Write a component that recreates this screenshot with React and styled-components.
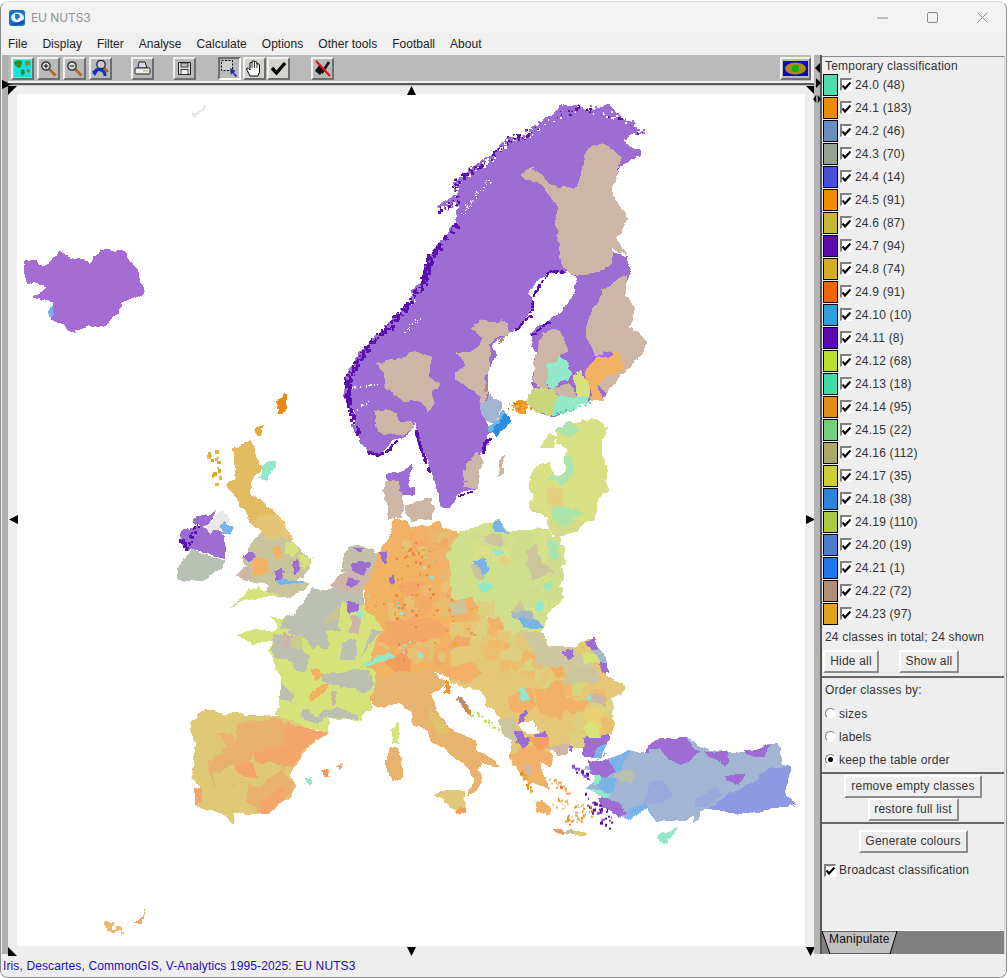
import React from 'react'
import styled, { createGlobalStyle } from 'styled-components'

const GlobalStyle = createGlobalStyle`
  html, body { margin: 0; padding: 0; background: #fff; }
  body { width: 1008px; height: 978px; overflow: hidden; font-family: "Liberation Sans", Arial, sans-serif; }
`

const Window = styled.div`
  width: 1007px;
  height: 977px;
  margin-top: 1px;
  box-sizing: border-box;
  border: 1px solid #8c8c8c;
  border-top-color: #d8d8d8;
  border-radius: 8px;
  background: #f0f0f0;
  display: flex;
  flex-direction: column;
  overflow: hidden;
`
const TitleBar = styled.div`
  height: 31px;
  flex: none;
  background: #f3f3f3;
  display: flex;
  align-items: center;
  padding-left: 8px;
  color: #8f8f8f;
  font-size: 12px;
  letter-spacing: -0.1px;
  font-family: "Inter", "Liberation Sans", sans-serif;
  gap: 6px;
`
const WinButtons = styled.div`
  margin-left: auto;
  margin-right: -1px;
  display: flex;
  align-items: center;
  height: 100%;
`
const WinButton = styled.div`
  width: 50px;
  height: 100%;
  display: flex;
  align-items: center;
  justify-content: center;
`
const MenuBar = styled.div`
  height: 22px;
  flex: none;
  display: flex;
  align-items: center;
  padding-left: 7px;
  gap: 15px;
  font-size: 12px;
  letter-spacing: 0.02px;
  color: #222;
`
const Body = styled.div`
  flex: 1;
  min-height: 0;
  display: flex;
  position: relative;
`
const LeftColumn = styled.div`
  width: 813px;
  flex: none;
  display: flex;
  flex-direction: column;
  position: relative;
`
const ToolBar = styled.div`
  height: 26px;
  flex: none;
  margin: 0 3px 1px 7px;
  background: #bababa;
  display: flex;
  align-items: center;
  padding-left: 3px;
`
const SideStripe = styled.div`
  position: absolute;
  left: 1px;
  top: 0;
  bottom: 0;
  width: 6px;
  background: #b0b0b0;
`
const ToolSpacer = styled.div`
  width: ${p => p.$w}px;
  flex: ${p => (p.$grow ? 1 : 'none')};
`
const ToolButton = styled.div`
  width: ${p => p.$w || 23}px;
  height: 23px;
  flex: none;
  box-sizing: border-box;
  margin-right: ${p => p.$mr ?? 3}px;
  display: flex;
  align-items: center;
  justify-content: center;
  background: ${p => (p.$on ? '#d4d4cc' : '#bababa')};
  border: 2px solid;
  border-color: ${p => (p.$down ? '#6e6e6e #fff #fff #6e6e6e' : '#f0f0f0 #6e6e6e #6e6e6e #f0f0f0')};
`
const Rule = styled.div`
  height: 2px;
  flex: none;
  margin: 1px 0 0 7px;
  background: #5a5a5a;
  border-bottom: 1px solid #c8c8c8;
`
const MapArea = styled.div`
  flex: 1;
  min-height: 0;
  margin-left: 7px;
  padding: 8px 9px 8px 9px;
  background: #eeeeee;
  display: flex;
  position: relative;
`
const MapSvg = styled.svg`
  width: 788px;
  height: 852px;
  display: block;
  background: #fff;
  flex: none;
`
const Arrow = styled.div`
  position: absolute;
  left: ${p => p.$x}px;
  top: ${p => p.$y}px;
  width: ${p => p.$w || 9}px;
  height: ${p => p.$h || 9}px;
  background: #000;
  clip-path: ${p => p.$clip};
`
const Splitter = styled.div`
  width: 8px;
  flex: none;
  box-sizing: border-box;
  background: #b4b4b4;
  border-right: 2px solid #555;
  position: relative;
`
const SidePanel = styled.div`
  width: 183px;
  flex: none;
  margin-top: 1px;
  box-sizing: border-box;
  background: #eeeeee;
  border-top: 1px solid #8a8a8a;
  border-right: 1px solid #d0d0d0;
  display: flex;
  flex-direction: column;
  font-size: 12px;
  letter-spacing: 0.2px;
  color: #333;
`
const PanelContent = styled.div`
  flex: 1;
  display: flex;
  flex-direction: column;
`
const PanelTitle = styled.div`
  height: 16px;
  line-height: 18px;
  padding-left: 3px;
`
const ClassRow = styled.div`
  height: 23px;
  display: flex;
  align-items: center;
  padding-left: 1px;
`
const Swatch = styled.div`
  width: 15px;
  height: 22px;
  box-sizing: border-box;
  border: 1px solid #000;
  background: ${p => p.$color};
  flex: none;
`
const CheckBox = styled.div`
  width: 12px;
  height: 13px;
  flex: none;
  box-sizing: border-box;
  margin: ${p => p.$m || '0 3px 0 2px'};
  background: #fff;
  border: solid;
  border-width: 2px 1px 1px 2px;
  border-color: #808080 #fff #fff #808080;
  display: flex;
  align-items: center;
  justify-content: center;
`
const Summary = styled.div`
  height: 23px;
  line-height: 24px;
  padding-left: 3px;
  margin-bottom: 2px;
`
const ButtonRow = styled.div`
  display: flex;
  justify-content: ${p => p.$justify || 'center'};
  gap: ${p => p.$gap || 0}px;
  padding: ${p => p.$pad || 0};
`
const AwtButton = styled.div`
  box-sizing: border-box;
  width: ${p => p.$w}px;
  height: 23px;
  line-height: 19px;
  text-align: center;
  white-space: nowrap;
  background: #eeeeee;
  border: 2px solid;
  border-color: #fff #8c8c8c #8c8c8c #fff;
`
const Divider = styled.div`
  height: 2px;
  background: #666;
  margin: ${p => p.$m || 0};
`
const OptionLabel = styled.div`
  height: 24px;
  line-height: 24px;
  padding-left: 3px;
`
const RadioRow = styled.div`
  height: 23px;
  display: flex;
  align-items: center;
  padding-left: 3px;
  gap: 3px;
`
const Radio = styled.div`
  width: 11px;
  height: 11px;
  border-radius: 50%;
  box-sizing: border-box;
  background: #fff;
  border: 1px solid;
  border-color: #777 #f4f4f4 #f4f4f4 #777;
  display: flex;
  align-items: center;
  justify-content: center;
  &::after {
    content: "";
    width: 5px;
    height: 5px;
    border-radius: 50%;
    background: ${p => (p.$on ? '#000' : 'transparent')};
  }
`
const BroadcastRow = styled.div`
  display: flex;
  align-items: center;
  padding: 11px 0 0 2px;
  height: 12px;
`
const TabStrip = styled.div`
  height: 24px;
  flex: none;
  background: #808080;
  border-top: 1px solid #fff;
  box-sizing: border-box;
  display: flex;
`
const Tab = styled.div`
  width: 76px;
  height: 23px;
  position: relative;
  color: #111;
  line-height: 17px;
  padding-left: 7px;
  box-sizing: border-box;
`
const TabShape = styled.svg`
  position: absolute;
  left: 0;
  top: 0;
  z-index: 0;
`
const TabLabel = styled.span`
  position: relative;
`
const StatusBar = styled.div`
  height: 23px;
  flex: none;
  padding-left: 2px;
  line-height: 24px;
  font-size: 12px;
  letter-spacing: 0.12px;
  color: #1c0fb4;
  background: #eeeeee;
`

const MENUS = ['File', 'Display', 'Filter', 'Analyse', 'Calculate', 'Options', 'Other tools', 'Football', 'About']

const CLASSES = [
  ['24.0 (48)', '#4fdcae'], ['24.1 (183)', '#ee8a00'], ['24.2 (46)', '#6a8fbd'], ['24.3 (70)', '#93a58f'],
  ['24.4 (14)', '#4750d8'], ['24.5 (91)', '#f28c00'], ['24.6 (87)', '#c9b834'], ['24.7 (94)', '#5b0cb0'],
  ['24.8 (74)', '#d4ae22'], ['24.9 (91)', '#f06408'], ['24.10 (10)', '#30a0d8'], ['24.11 (8)', '#5b0cb0'],
  ['24.12 (68)', '#b8e02c'], ['24.13 (18)', '#40dca8'], ['24.14 (95)', '#e48c18'], ['24.15 (22)', '#70d07c'],
  ['24.16 (112)', '#aca868'], ['24.17 (35)', '#c8d030'], ['24.18 (38)', '#2a84dc'], ['24.19 (110)', '#acc844'],
  ['24.20 (19)', '#507cd0'], ['24.21 (1)', '#1a78f0'], ['24.22 (72)', '#b08e78'], ['24.23 (97)', '#e0a418'],
]

const PUR = '#9d6dd4'
const DEEP = '#5a10b0'
const TAN = '#ceb6a6'
const ORG = '#f2b264'
const MINT = '#93e8ca'
const LIME = '#d5e37a'
const GREY = '#bcc0b0'
const BLUE = '#78b4e8'

// coordinates are read off the 3x crops of the reference, one group per crop
const NORTH = [
  [PUR, '665,15 720,12 735,30 780,20 810,18 830,40 860,60 905,90 870,100 850,115 895,150 895,170 870,175 845,195 830,225 700,300 680,510 665,515 620,510 570,570 580,620 550,670 505,690 470,740 445,800 440,920 450,1000 440,1010 420,1080 400,1170 350,1185 335,1220 300,1220 295,1160 270,1110 240,1040 225,960 215,985 180,1010 140,1050 100,1060 60,1030 50,1000 30,930 15,870 15,830 40,780 70,740 120,700 150,660 190,640 230,600 215,580 250,530 260,470 300,420 345,370 350,320 290,325 340,280 345,240 390,205 440,180 470,150 500,110 560,100 600,65'],
  [PUR, '680,510 710,520 820,455 860,460 870,515 860,530 855,570 885,630 870,670 920,730 880,790 860,810 800,880 750,905 640,945 600,945 570,900 575,870 585,760 570,700 620,660 680,620 710,570 700,520'],
  [TAN, '555,215 575,195 590,215 630,250 700,260 720,235 735,150 790,120 845,170 830,225 825,235 815,280 865,350 830,410 855,455 820,450 815,490 780,510 710,520 680,510 665,480 655,450 660,410 650,370 650,310 630,285 590,250'],
  [TAN, '780,565 855,525 860,570 885,630 870,670 920,730 880,790 860,810 800,880 770,850 830,810 858,800 820,750 760,760 738,700 760,620 778,600'],
  [ORG, '745,785 770,760 810,770 820,750 840,755 857,800 830,825 790,840 770,850 780,880 790,895 760,905 740,850 745,820'],
  [TAN, '585,760 620,690 650,685 685,750 660,765 625,790 615,850 635,870 590,865 580,830'],
  [MINT, '620,790 660,765 690,790 695,830 640,865 615,850'],
  [LIME, '700,830 730,810 745,850 745,885 705,880'],
  [TAN, '640,865 690,845 705,880 670,890'],
  [MINT, '630,940 660,890 700,880 750,885 750,905 690,930'],
  ['#c9d67c', '570,870 640,865 665,890 630,945 590,940 565,910'],
  ['#ee9a28', '510,910 540,900 565,905 555,935 530,935'],
  [TAN, '110,790 195,765 210,745 270,775 270,830 295,840 275,870 285,910 260,940 235,900 190,900 135,850'],
  [TAN, '100,930 150,920 185,965 215,960 215,985 175,1005 130,1005 115,980'],
  [TAN, '390,670 425,650 500,660 510,690 470,720 440,770 445,800 435,830 440,880 430,915 405,880 350,825 370,790 360,760 410,745 425,710'],
  ['#a2b4d2', '425,915 445,885 480,900 490,925 460,965 425,945'],
  [BLUE, '460,965 490,930 505,945 480,965 460,990 470,1000 445,1000 442,985'],
  ['#2b8ce0', '470,965 500,940 515,965 490,990 460,1010 450,995'],
  [TAN, '380,1075 420,1055 425,1085 410,1160 380,1165 375,1130'],
  [TAN, '465,1125 490,1070 505,1065 480,1120'],
  [PUR, '140,1125 170,1120 210,1085 215,1125 205,1165 225,1165 215,1185 190,1180 175,1145 140,1145'],
  [TAN, '135,1145 175,1145 190,1180 190,1250 145,1260 135,1200'],
  [TAN, '190,1215 275,1185 275,1255 210,1260'],
  ['#d7e184', '650,990 690,965 730,955 805,970 785,1020 790,1060 710,1050 680,1040 650,1020'],
  ['#d7e184', '600,1040 630,995 650,1000 640,1040'],
  ['#d9e084', '565,1150 590,1095 640,1080 680,1040 790,1060 795,1100 805,1160 770,1200 760,1260 640,1260 570,1190'],
  ['#aee4ac', '650,985 700,965 720,990 690,1010'],
  ['#aee4ac', '680,1065 700,1065 700,1130 670,1150 620,1130 640,1115'],
  ['#e0d080', '620,1165 670,1165 665,1215 620,1210'],
  ['#aee4ac', '630,1215 690,1210 730,1240 690,1260 640,1260'],
  ['#fff', '640,1050 680,1040 678,1100 660,1125 640,1115 630,1080'],
]

const WEST_BASE = [
  [PUR, '30,90 100,75 165,105 165,170 90,150 50,150 30,125'],
  ['#b9c0b4', '70,150 165,175 160,205 90,235 30,240 15,210 45,175'],
  [PUR, '75,65 95,35 135,25 120,55 100,75 85,70'],
  ['#e8e8e8', '105,70 135,45 165,30 180,60 145,95 120,90'],
  [BLUE, '145,80 165,70 190,75 180,95 155,100'],
  ['#e5c478', '250,70 270,40 320,40 350,80 365,120 330,130 275,125 270,95'],
  ['#c8c49c', '270,100 340,120 375,130 430,175 425,200 380,230 420,250 400,275 320,285 280,280 290,250 240,235 215,170 240,140'],
  [LIME, '345,130 375,125 385,155 360,175 345,160'],
  [LIME, '385,160 420,170 430,190 400,200'],
  [PUR, '360,185 385,180 390,205 370,215'],
  [PUR, '315,215 335,205 345,235 320,245'],
  [ORG, '250,170 285,165 295,220 250,225'],
  [ORG, '310,140 330,135 330,175 310,170'],
  [TAN, '190,225 240,195 245,225 230,240'],
  [PUR, '215,165 235,150 255,165 240,185'],
  [LIME, '180,320 230,265 270,255 330,280 290,285 230,295'],
  [BLUE, '320,240 400,235 395,245 330,250'],
  // france
  [LIME, '310,340 330,350 380,350 430,270 470,260 520,300 580,310 640,380 620,430 590,500 620,520 600,590 610,620 560,660 480,655 475,690 430,680 350,670 320,640 335,570 330,530 290,450 300,420 255,430 200,400 250,380 305,390 320,380'],
  [GREY, '375,345 430,265 470,260 520,300 505,350 510,385 470,395 470,440 425,440 410,410 385,405 330,385 340,355'],
  [GREY, '515,425 555,425 555,475 520,470'],
  [GREY, '565,475 610,420 640,385 605,380 585,440'],
  [GREY, '305,395 385,405 415,470 400,515 375,510 350,470 310,475 295,450'],
  [GREY, '455,520 550,510 590,510 610,550 580,580 555,555 510,555 455,545'],
  [GREY, '330,545 355,555 375,575 365,605 335,595'],
  [GREY, '390,645 420,625 440,650 470,625 510,620 560,640 560,655 480,650 440,665'],
  ['#c9c694', '470,345 505,320 510,345 470,370'],
  [TAN, '540,345 568,345 568,400 540,400'],
  [TAN, '330,400 365,400 365,435 335,435'],
  ['#cccb90', '360,405 400,400 395,445 365,440'],
  [TAN, '475,575 500,575 505,610 485,610'],
  ['#f4b060', '420,505 450,500 458,530 435,535'],
  ['#f4b060', '405,600 450,560 480,550 460,580 420,605'],
  // benelux
  [GREY, '425,270 470,260 530,250 580,270 580,310 520,310 470,320 420,300'],
  [TAN, '480,250 530,210 570,190 600,230 590,270 540,285'],
  ['#c4c0a8', '520,150 570,130 610,145 625,170 600,230 570,190 510,220'],
  [PUR, '545,180 575,170 605,195 575,215 550,210'],
  [PUR, '535,225 565,240 545,260 530,250'],
  [PUR, '530,300 570,300 570,330 540,335'],
  [MINT, '565,320 590,340 560,350'],
  [PUR, '555,140 580,140 570,155'],
  // germany and the alps
  [ORG, '590,230 640,140 670,60 700,55 745,90 800,70 860,90 890,200 930,300 962,350 962,500 890,560 830,530 780,510 620,520 590,500 620,430 640,380 580,310'],
]

const WEST_TOP = [
  ['#f4a868', '650,360 720,350 810,350 830,395 770,420 700,440 650,430'],
  ['#f39e60', '640,480 700,445 725,505 680,520'],
  ['#e8bd6e', '780,310 830,290 890,300 885,345 820,345'],
  ['#f4a868', '820,510 880,490 930,500 920,545 850,545'],
  ['#d0df8c', '860,100 962,60 962,350 930,300 890,200'],
  [PUR, '630,155 650,150 652,190 630,185'],
  [PUR, '655,225 672,225 670,245 655,240'],
  [PUR, '595,480 618,478 612,497'],
  [MINT, '575,488 640,465 655,440 670,460 640,480 600,500'],
  [MINT, '740,450 762,455 755,472 742,470'],
  // italy, corsica, sardinia, sicily
  ['#e8b36e', '600,590 620,520 780,510 830,540 790,580 800,630 840,680 910,720 920,745 975,775 990,800 970,790 935,780 925,810 945,830 930,855 915,880 895,885 910,850 905,810 840,760 790,720 730,660 700,610 640,620 610,610'],
  ['#e0c26c', '760,620 800,640 840,690 800,700'],
  ['#ee9a28', '825,545 835,540 845,580 830,575'],
  ['#b08e78', '865,595 890,600 910,640 880,620'],
  [LIME, '660,690 685,660 692,730 670,735'],
  ['#e8b36e', '650,760 680,740 695,770 695,830 660,840 645,790'],
  ['#dfc878', '790,885 820,875 890,870 880,930 850,920'],
  ['#f39a60', '855,925 880,915 880,938 860,935'],
  ['#f39a60', '450,815 480,800 485,825 470,835'],
  ['#eaa868', '500,795 518,795 515,808'],
  [MINT, '408,840 428,838 424,852 410,850'],
  // iberia
  ['#e0c976', '60,660 100,630 210,640 320,645 420,680 480,690 440,725 390,770 360,820 380,850 345,895 300,935 195,940 185,965 155,940 75,910 90,860 55,830 75,750'],
  ['#eab06e', '205,665 320,650 345,680 340,730 300,745 260,745 240,790 170,790 130,820 135,860 215,850 280,850 330,800 360,830 375,850 340,895 300,935 270,930 225,900 230,850 130,860 120,790 150,745 205,710'],
  ['#f3a56a', '345,670 420,680 480,695 440,725 395,755 370,790 340,800 300,745 340,730'],
  ['#f3a56a', '255,745 300,745 345,800 300,790 260,780'],
  ['#f3a56a', '195,790 255,790 270,825 205,825'],
  ['#f3a56a', '270,935 295,880 345,860 345,895 300,935'],
  ['#f3a56a', '75,860 95,860 95,905 75,910'],
  ['#efb070', '140,700 190,700 195,745 160,735'],
]

const EAST_BASE = [
  ['#d0df8c', '0,130 30,100 100,70 130,55 150,55 180,85 300,85 335,180 320,205 340,290 295,340 290,370 270,390 150,400 0,300'],
  ['#d4dc88', '240,0 430,0 410,40 390,95 320,105 300,85 295,50 250,30'],
  // hungary and the balkans
  ['#e4c878', '0,300 150,400 270,390 300,430 375,435 420,410 475,480 470,525 525,550 525,580 490,590 490,640 465,700 400,730 300,745 300,800 270,790 290,830 300,860 255,850 220,830 180,770 185,720 150,650 70,560 0,550'],
]

const EAST_TOP = [
  [BLUE, '125,58 150,55 180,92 135,92'],
  ['#cbc49c', '100,110 150,100 155,135 110,130'],
  [MINT, '125,140 165,150 170,165 140,165'],
  ['#cbc49c', '62,185 100,165 118,205 100,235 75,225'],
  [BLUE, '72,175 105,170 118,210 100,218'],
  [MINT, '85,245 120,240 125,265 100,285 82,265'],
  ['#cbc49c', '225,145 260,135 275,185 305,205 255,235 230,190'],
  ['#a8e4b0', '275,240 305,240 310,265 285,275'],
  ['#a8e4b0', '295,120 325,120 332,165 295,165'],
  ['#e0d080', '155,170 180,165 185,190 160,195'],
  ['#aee4ac', '290,15 390,12 400,40 360,75 330,75'],
  ['#f2b068', '0,290 60,290 95,330 50,360 0,370'],
  ['#cbc49c', '0,300 45,290 50,335 10,345'],
  ['#f2b068', '110,350 145,345 160,385 125,395'],
  ['#f4a868', '0,420 60,400 60,430 0,450'],
  ['#f2b068', '0,490 60,485 100,520 50,550 0,540'],
  ['#cfc89c', '210,390 280,395 300,430 375,435 400,470 420,500 390,520 330,530 290,490 250,490 245,440'],
  ['#cbc49c', '340,515 430,500 455,540 390,545 340,550'],
  [PUR, '335,450 370,445 372,470 345,485'],
  [PUR, '408,420 435,410 447,445 420,450'],
  [PUR, '445,480 475,478 478,510 460,515'],
  [LIME, '395,460 440,458 445,480 398,490'],
  ['#a4b8c8', '420,445 450,445 475,480 445,480'],
  ['#f0b060', '295,500 340,495 345,520 320,540'],
  ['#f2b068', '255,560 330,545 350,590 410,600 400,640 345,630 330,660 270,640'],
  ['#f2b068', '175,590 250,560 255,620 210,640 185,620'],
  [TAN, '412,580 470,580 470,610 415,612'],
  [MINT, '402,582 414,582 414,605 402,602'],
  ['#e9d072', '400,640 450,630 460,690 420,690'],
  [LIME, '395,670 440,665 450,705 410,710'],
  [MINT, '205,575 228,570 232,600 210,605'],
  ['#cbc49c', '150,660 185,640 205,680 190,725 155,690'],
  [BLUE, '200,355 265,350 285,375 215,380'],
  ['#a4b8c8', '185,335 250,335 250,352 195,355'],
  ['#cbc49c', '190,320 215,295 220,335 190,335'],
  [MINT, '250,305 280,300 282,330 255,335'],
  [PUR, '205,660 225,625 235,630 222,670'],
  ['#fff', '210,665 250,660 262,690 240,705 215,690'],
  [PUR, '195,690 215,695 225,720 248,715 225,755 195,730'],
  ['#f4a060', '240,715 290,700 305,740 260,750'],
  [PUR, '250,695 285,695 285,708 255,708'],
  // greece
  ['#f2b068', '180,760 240,740 300,760 300,800 270,790 290,830 300,860 255,850 220,830 200,800'],
  ['#f2b068', '255,900 280,890 300,925 300,945 270,935'],
  [TAN, '300,735 360,728 355,755 315,762'],
  [TAN, '215,795 240,785 245,820 225,825'],
  ['#f39a60', '318,985 345,985 350,997 325,997'],
  ['#b8c0a8', '345,990 370,992 365,1005 350,1003'],
  ['#e0cc70', '365,998 415,992 405,1005 370,1010'],
  // turkey
  ['#a2b6d4', '405,800 470,760 540,750 585,750 640,710 705,710 735,720 770,745 880,760 950,730 990,730 1000,790 1025,800 1015,860 1030,915 1015,925 940,925 840,935 760,930 735,970 735,940 700,960 625,965 590,925 520,955 505,930 445,910 480,880 410,860 440,820 405,810'],
  ['#8f98e2', '770,930 850,875 930,830 965,795 1025,800 1015,860 1030,915 1015,925 940,925 840,935'],
  ['#9aa8dc', '590,850 640,835 665,890 620,910 580,905'],
  ['#9aa8dc', '740,890 790,860 810,880 770,925 735,925'],
  [PUR, '585,750 640,710 705,710 750,755 690,795 640,775 625,745'],
  [PUR, '765,750 840,755 835,790 790,775'],
  [PUR, '888,750 960,730 945,765 890,770'],
  [PUR, '832,825 885,815 860,848 835,845'],
  [PUR, '405,705 470,705 470,730 430,770 395,770'],
  [PUR, '355,738 375,738 370,755'],
  [PUR, '410,780 470,780 500,810 470,835 425,820'],
  [PUR, '445,890 480,880 510,925 525,930 505,950 450,915'],
  [BLUE, '470,790 530,750 545,755 510,810 490,810'],
  [BLUE, '520,955 530,920 590,910 625,960 590,925 530,960'],
  [BLUE, '440,835 500,835 490,870 450,860'],
  [MINT, '430,825 450,825 450,845 430,845'],
  [MINT, '415,860 490,870 480,885 440,880'],
  ['#b8c0b0', '492,825 525,800 552,820 545,848 510,850'],
  ['#fff', '445,780 495,750 530,752 475,780'],
  [BLUE, '430,745 475,728 460,770 430,770'],
  [MINT, '615,1005 650,995 690,980 655,1020 625,1025'],
]

const LOOSE = [
  ['#a56cd4', '25,258 45,265 60,252 90,262 100,250 125,250 140,270 143,290 120,305 105,325 70,330 52,318 55,300 32,298 45,285 25,280'],
  ['#70b4e8', '47,308 54,304 55,316 48,316'],
  ['#e8e8e8', '193,114 203,105 205,107 196,115'],
  ['#e58c14', '276,402 285,392 286,398 282,412 277,410'],
  ['#e0a840', '256,428 265,424 263,436 258,436'],
  ['#e3bc62', '232,448 250,440 262,462 248,490 262,500 276,512 278,524 255,530 246,512 226,488 238,470'],
  ['#93e8ca', '262,462 275,462 268,480 258,478'],
  ['#f0b368', '103,922 113,920 112,928 104,928'],
  ['#f0b368', '116,925 122,925 122,931 116,931'],
  ['#f0a868', '135,924 141,914 143,910 140,924'],
]

const makeRandom = seed => {
  let s = seed
  return () => {
    s = (s * 9301 + 49297) % 233280
    return s / 233280
  }
}

// little square cells jittered along a line, for broken coasts and island chains
const scatter = (line, perSegment, spread, size, colours, seed = 5) => {
  const next = makeRandom(seed)
  const out = []
  for (let i = 0; i < line.length - 1; i++) {
    const [x0, y0] = line[i]
    const [x1, y1] = line[i + 1]
    for (let n = 0; n < perSegment; n++) {
      const t = next()
      out.push({
        x: x0 + (x1 - x0) * t + (next() - 0.5) * spread,
        y: y0 + (y1 - y0) * t + (next() - 0.5) * spread,
        s: size * (0.7 + next() * 0.8),
        c: colours[Math.floor(next() * colours.length)],
      })
    }
  }
  return out
}

const NORTH_COAST = [[560, 100], [500, 112], [440, 182], [392, 208], [345, 245], [345, 300], [295, 328]]
const FAR_NORTH = [[905, 95], [830, 40], [720, 18], [600, 68], [560, 100]]
const WEST_COAST = [[345, 372], [265, 470], [252, 530], [222, 585], [150, 665], [75, 740], [20, 830], [18, 880], [50, 1000]]

const SCANDI_CELLS = [
  ...scatter(FAR_NORTH, 34, 22, 6, [PUR, PUR, PUR, DEEP, '#fff']),
  ...scatter(NORTH_COAST, 34, 18, 6, [DEEP, DEEP, PUR, '#fff']),
  ...scatter(WEST_COAST, 60, 16, 7, [DEEP, DEEP, DEEP, DEEP, PUR], 9),
  ...scatter([[80, 1050], [110, 1060], [140, 1048], [170, 1015]], 20, 5, 5, [DEEP], 7),
  ...scatter([[225, 985], [240, 1040], [265, 1110]], 26, 5, 6, [DEEP], 7),
  ...scatter([[350, 1185], [395, 1170]], 16, 3, 4, [DEEP], 7),
  ...scatter([[428, 1055], [430, 1025], [448, 1008]], 18, 4, 6, [DEEP], 7),
  ...scatter([[525, 685], [570, 640], [580, 575], [625, 510], [670, 510]], 22, 6, 5, [DEEP], 7),
  ...scatter([[575, 700], [625, 660]], 22, 7, 5, [DEEP], 7),
  ...scatter([[190, 690], [240, 650]], 16, 10, 3, ['#fff'], 3),
  ...scatter([[35, 858], [112, 850]], 22, 6, 3, ['#fff'], 4),
  ...scatter([[40, 930], [90, 900]], 12, 8, 3, ['#fff'], 6),
  ...scatter([[365, 345], [395, 295], [450, 235]], 20, 16, 3, ['#fff'], 8),
  ...scatter([[440, 820], [435, 880]], 10, 8, 5, ['#b08e78'], 8),
  ...scatter([[505, 695], [470, 725]], 10, 8, 5, ['#b08e78'], 8),
  ...scatter([[510, 915], [560, 915]], 30, 22, 5, ['#ee8a00', '#f4b060'], 2),
  ...scatter([[635, 940], [750, 905]], 30, 8, 4, ['#40dca8', MINT], 4),
]
const GERMAN_PATCHES = scatter([[680, 110], [810, 120], [860, 270], [690, 280], [660, 410], [860, 450]], 24, 70, 28, ['#f2b068', '#edb670', '#f4a868', '#e8c074', '#f3ac66'], 13)
const BALKAN_PATCHES = scatter([[40, 320], [150, 440], [260, 470], [360, 570], [440, 610], [330, 700]], 24, 70, 30, ['#e4c878', '#e8c070', '#dcd080', '#f0b868', '#d8d47e'], 17)
const POLISH_PATCHES = scatter([[60, 120], [280, 120], [300, 280], [140, 300]], 20, 60, 30, ['#d0df8c', '#cfdc8e', '#d8e088'], 21)
const CENTRAL_CELLS = scatter([[680, 120], [760, 200], [640, 300], [860, 350], [700, 450]], 22, 110, 6, ['#ef8a3c', '#ef8a3c', MINT, '#e0a830', '#f4985c'], 11)
const AEGEAN_CELLS = [
  ...scatter([[420, 895], [470, 965]], 34, 40, 6, [DEEP, DEEP, '#8f4fd0'], 3),
  ...scatter([[370, 795], [420, 835]], 16, 16, 6, ['#8f4fd0', DEEP], 6),
  ...scatter([[320, 900], [410, 930], [350, 960]], 30, 36, 5, ['#e0a830', '#f4a060', '#d8cf78', '#f08a10'], 4),
  ...scatter([[215, 815], [245, 870]], 18, 14, 6, ['#ee8a00', '#e0a830'], 9),
  ...scatter([[300, 830], [350, 870]], 20, 16, 5, ['#e0cc70', '#f4a060', '#f06408'], 7),
  ...scatter([[70, 635], [150, 685]], 24, 14, 5, ['#b8d840', LIME], 2),
  ...scatter([[20, 590], [60, 635]], 18, 8, 6, ['#ee8a00', '#b08e78'], 2),
]
const WEST_EXTRA = scatter([[30, 110], [45, 140], [90, 50]], 14, 14, 6, [DEEP], 5)
const HEBRIDES = scatter([[212, 445], [214, 480]], 16, 12, 2.5, ['#e8b640', '#e0a830'], 5)
const CANARIES = scatter([[94, 917], [120, 930]], 8, 8, 2.5, ['#f0b368'], 8)

const Regions = ({ list, offset }) => (
  <g transform={offset ? `translate(${offset[0]} ${offset[1]}) scale(0.3333)` : undefined}>
    {list.map(([fill, points], i) => (
      <polygon key={i} fill={fill} points={points} />
    ))}
  </g>
)

const Cells = ({ list, offset }) => (
  <g transform={offset ? `translate(${offset[0]} ${offset[1]}) scale(0.3333)` : undefined}>
    {list.map((d, i) => (
      <rect key={i} x={d.x} y={d.y} width={d.s} height={d.s} fill={d.c} />
    ))}
  </g>
)

const Tick = () => (
  <svg width="9" height="9" viewBox="0 0 9 9">
    <path d="M.5 4.5 L3 7.5 L8.5 1.5" fill="none" stroke="#000" strokeWidth="2.2" />
  </svg>
)

const EuropeMap = () => (
  <MapSvg viewBox="17 93 788 852" shapeRendering="crispEdges">
    <defs>
      <filter id="rough" filterUnits="userSpaceOnUse" x="17" y="93" width="788" height="852" colorInterpolationFilters="sRGB">
        <feTurbulence type="fractalNoise" baseFrequency="0.06" numOctaves="3" seed="4" />
        <feDisplacementMap in="SourceGraphic" scale="11" xChannelSelector="R" yChannelSelector="G" />
      </filter>
    </defs>
    <g filter="url(#rough)">
      <Regions list={LOOSE} />
      <Regions list={WEST_BASE} offset={[170, 500]} />
      <Cells list={GERMAN_PATCHES} offset={[170, 500]} />
      <Regions list={WEST_TOP} offset={[170, 500]} />
      <Regions list={EAST_BASE} offset={[450, 500]} />
      <Cells list={POLISH_PATCHES} offset={[450, 500]} />
      <Cells list={BALKAN_PATCHES} offset={[450, 500]} />
      <Regions list={EAST_TOP} offset={[450, 500]} />
      <Regions list={NORTH} offset={[340, 100]} />
    </g>
    <Cells list={SCANDI_CELLS} offset={[340, 100]} />
    <Cells list={CENTRAL_CELLS} offset={[170, 500]} />
    <Cells list={WEST_EXTRA} offset={[170, 500]} />
    <Cells list={AEGEAN_CELLS} offset={[450, 500]} />
    <Cells list={HEBRIDES} />
    <Cells list={CANARIES} />
  </MapSvg>
)

const GlobeIcon = () => (
  <svg width="17" height="17" viewBox="0 0 17 17">
    <rect width="17" height="17" fill="#18e0e0" />
    <path d="M0 2 L4 0 L8 1 L8 4 L6 8 L3 7 L1 5 Z" fill="#3a8a20" />
    <path d="M11 1 L16 1 L16 5 L12 6 L11 4 Z" fill="#8a8a20" />
    <path d="M7 10 L10 9 L11 13 L8 16 L7 13 Z" fill="#2f8a20" />
    <path d="M13 9 L16 10 L15 13 L13 12 Z" fill="#a07020" />
  </svg>
)
const ZoomIcon = ({ sign }) => (
  <svg width="17" height="17" viewBox="0 0 17 17">
    <line x1="9.5" y1="9.5" x2="15.5" y2="15.5" stroke="#a86a1c" strokeWidth="2.6" />
    <circle cx="6" cy="6" r="4.2" fill="#d6d6e0" stroke="#222" strokeWidth="1.2" />
    <line x1="3.8" y1="6" x2="8.2" y2="6" stroke="#111" />
    {sign === '+' && <line x1="6" y1="3.8" x2="6" y2="8.2" stroke="#111" />}
  </svg>
)
const UndoZoomIcon = () => (
  <svg width="18" height="18" viewBox="0 0 18 18">
    <line x1="12" y1="9" x2="16" y2="13" stroke="#a86a1c" strokeWidth="2.6" />
    <circle cx="9" cy="5.5" r="4.2" fill="#c8c8d8" stroke="#222" strokeWidth="1.3" />
    <path d="M2 15 Q3 9 9 11 Q13 12 13 17" fill="none" stroke="#1030c0" strokeWidth="3" />
    <path d="M0 12 L6 12 L3 17 Z" fill="#1030c0" />
  </svg>
)
const PrintIcon = () => (
  <svg width="17" height="15" viewBox="0 0 17 15">
    <path d="M5 1 L11 1 L13 7 L4 7 Z" fill="#d8d8f0" stroke="#222" />
    <rect x="1" y="7" width="15" height="6" rx="1" fill="#eee" stroke="#222" />
    <rect x="9" y="9" width="5" height="1.5" fill="#c8d020" />
  </svg>
)
const SaveIcon = () => (
  <svg width="15" height="15" viewBox="0 0 15 15">
    <path d="M1.5 1.5 H13.5 V13.5 H1.5 Z" fill="#ddd" stroke="#222" />
    <rect x="4" y="2" width="7" height="4" fill="#bbb" stroke="#222" strokeWidth=".8" />
    <rect x="4" y="8.5" width="7" height="5" fill="#eee" stroke="#222" strokeWidth=".8" />
  </svg>
)
const SelectIcon = () => (
  <svg width="19" height="19" viewBox="0 0 19 19">
    <rect x="1.5" y="1.5" width="11" height="10" fill="#d0d0d0" stroke="#000" strokeDasharray="2 1.5" />
    <path d="M10 9 L16 12 L13.5 13 L17 17 L15.5 18 L12.5 14 L11 16 Z" fill="#1a2bb0" />
  </svg>
)
const HandIcon = () => (
  <svg width="19" height="19" viewBox="0 0 19 19">
    <path d="M5 17 L1.5 10 Q1.5 8.5 3.5 9.5 L5 11 L5 4 Q6 2.5 7 4 L7 2.5 Q8 1 9.5 2.5 L9.5 3 Q11 2 12 3.5 L12 5 Q13.5 4 14.5 6 L14.5 13 L13 17 Z" fill="#fff" stroke="#000" strokeWidth="1" />
    <path d="M7 4 V9 M9.5 3 V9 M12 4 V9" stroke="#000" strokeWidth=".8" />
  </svg>
)
const CheckIcon = () => (
  <svg width="17" height="15" viewBox="0 0 17 15">
    <path d="M2 7 L6.5 12 L15 2" fill="none" stroke="#000" strokeWidth="3.4" />
  </svg>
)
const NoCheckIcon = () => (
  <svg width="19" height="19" viewBox="0 0 19 19">
    <path d="M7 10 L9.5 13 L16 3" fill="none" stroke="#111" strokeWidth="2.6" />
    <path d="M6 6 L11 11 L7 16 L2 12 Z" fill="#111" />
    <line x1="3" y1="2" x2="17" y2="17" stroke="#e01010" strokeWidth="2" />
  </svg>
)
const OverviewIcon = () => (
  <svg width="25" height="15" viewBox="0 0 25 15">
    <rect width="25" height="15" fill="#0a10b0" />
    <ellipse cx="12.5" cy="7.5" rx="10.5" ry="6" fill="#b08818" />
    <circle cx="12.5" cy="7.5" r="3.6" fill="#00b818" />
  </svg>
)
const AppIcon = () => (
  <svg width="16" height="16" viewBox="0 0 16 16">
    <rect width="16" height="16" rx="3" fill="#1a6fd0" />
    <ellipse cx="8.5" cy="7.5" rx="6.5" ry="5" fill="#e8f2fb" />
    <path d="M3 13 Q8 14 14 10 L15 14 L3 15 Z" fill="#0d4fa8" />
    <path d="M6 4 L10 4 L11 7 L8 10 L6 8 Z" fill="#1c7fc8" />
  </svg>
)

export default function App() {
  return (
    <>
      <GlobalStyle />
      <Window>
        <TitleBar>
          <AppIcon />
          EU NUTS3
          <WinButtons>
            <WinButton>
              <svg width="11" height="11" viewBox="0 0 11 11"><line x1="0" y1="6" x2="11" y2="6" stroke="#8a8a8a" /></svg>
            </WinButton>
            <WinButton>
              <svg width="11" height="11" viewBox="0 0 11 11"><rect x=".5" y=".5" width="10" height="10" rx="1.5" fill="none" stroke="#8a8a8a" /></svg>
            </WinButton>
            <WinButton>
              <svg width="11" height="11" viewBox="0 0 11 11"><path d="M.5 .5 L10.5 10.5 M10.5 .5 L.5 10.5" stroke="#8a8a8a" /></svg>
            </WinButton>
          </WinButtons>
        </TitleBar>
        <MenuBar>
          {MENUS.map(m => <span key={m}>{m}</span>)}
        </MenuBar>
        <Body>
          <LeftColumn>
            <SideStripe />
            <ToolBar>
              <ToolButton><GlobeIcon /></ToolButton>
              <ToolButton><ZoomIcon sign="+" /></ToolButton>
              <ToolButton><ZoomIcon sign="-" /></ToolButton>
              <ToolButton><UndoZoomIcon /></ToolButton>
              <ToolSpacer $w={16} />
              <ToolButton><PrintIcon /></ToolButton>
              <ToolSpacer $w={16} />
              <ToolButton><SaveIcon /></ToolButton>
              <ToolSpacer $w={19} />
              <ToolButton $mr={2} $down><SelectIcon /></ToolButton>
              <ToolButton $mr={1} $on><HandIcon /></ToolButton>
              <ToolButton $on><CheckIcon /></ToolButton>
              <ToolSpacer $w={18} />
              <ToolButton><NoCheckIcon /></ToolButton>
              <ToolSpacer $grow />
              <ToolButton $w={31} $mr={0}><OverviewIcon /></ToolButton>
            </ToolBar>
            <Rule />
            <MapArea>
              <EuropeMap />
              <Arrow $x={0} $y={0} $clip="polygon(0 0, 100% 0, 0 100%)" />
              <Arrow $x={798} $y={0} $clip="polygon(0 0, 100% 0, 100% 100%)" />
              <Arrow $x={0} $y={861} $clip="polygon(0 0, 100% 100%, 0 100%)" />
              <Arrow $x={798} $y={861} $clip="polygon(0 0, 100% 0, 50% 100%)" />
              <Arrow $x={399} $y={0} $clip="polygon(50% 0, 100% 100%, 0 100%)" />
              <Arrow $x={399} $y={861} $clip="polygon(0 0, 100% 0, 50% 100%)" />
              <Arrow $x={1} $y={429} $clip="polygon(100% 0, 100% 100%, 0 50%)" />
              <Arrow $x={798} $y={429} $clip="polygon(0 0, 100% 50%, 0 100%)" />
            </MapArea>
            <Arrow $x={1} $y={25} $clip="polygon(0 0, 100% 50%, 0 100%)" />
          </LeftColumn>
          <Splitter>
            <Arrow $x={1} $y={8} $w={5} $h={10} $clip="polygon(100% 0, 100% 100%, 0 50%)" />
            <Arrow $x={2} $y={23} $w={5} $h={10} $clip="polygon(0 0, 100% 50%, 0 100%)" />
            <Arrow $x={-1} $y={40} $w={8} $h={8} $clip="polygon(0 50%, 40% 0, 40% 100%, 60% 100%, 60% 0, 100% 50%, 60% 100%, 40% 100%)" />
          </Splitter>
          <SidePanel>
            <PanelContent>
              <PanelTitle>Temporary classification</PanelTitle>
              {CLASSES.map(([label, color]) => (
                <ClassRow key={label}>
                  <Swatch $color={color} />
                  <CheckBox><Tick /></CheckBox>
                  {label}
                </ClassRow>
              ))}
              <Summary>24 classes in total; 24 shown</Summary>
              <ButtonRow $justify="flex-start" $gap={20} $pad="0 0 0 1px">
                <AwtButton $w={56}>Hide all</AwtButton>
                <AwtButton $w={60}>Show all</AwtButton>
              </ButtonRow>
              <Divider $m="3px 0 0" />
              <OptionLabel>Order classes by:</OptionLabel>
              <RadioRow><Radio />sizes</RadioRow>
              <RadioRow><Radio />labels</RadioRow>
              <RadioRow><Radio $on />keep the table order</RadioRow>
              <Divider $m="1px 0 0" />
              <ButtonRow $pad="1px 0 0"><AwtButton $w={138}>remove empty classes</AwtButton></ButtonRow>
              <ButtonRow><AwtButton $w={91}>restore full list</AwtButton></ButtonRow>
              <Divider $m="1px 0 6px" />
              <ButtonRow><AwtButton $w={109}>Generate colours</AwtButton></ButtonRow>
              <BroadcastRow>
                <CheckBox $m="0 3px 0 0"><Tick /></CheckBox>
                Broadcast classification
              </BroadcastRow>
            </PanelContent>
            <TabStrip>
              <Tab>
                <TabShape width="76" height="23" viewBox="0 0 76 23">
                  <path d="M0 0 H75 L68 23 H8 Z" fill="#c0c0c0" stroke="#000" />
                </TabShape>
                <TabLabel>Manipulate</TabLabel>
              </Tab>
            </TabStrip>
          </SidePanel>
        </Body>
        <StatusBar>Iris, Descartes, CommonGIS, V-Analytics 1995-2025: EU NUTS3</StatusBar>
      </Window>
    </>
  )
}
